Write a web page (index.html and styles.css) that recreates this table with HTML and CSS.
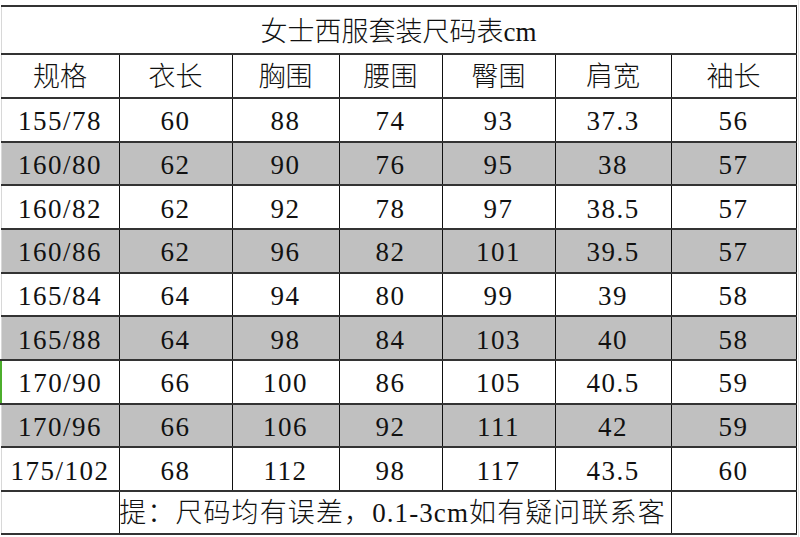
FILE: index.html
```html
<!DOCTYPE html>
<html lang="zh">
<head>
<meta charset="utf-8">
<title>女士西服套装尺码表</title>
<link rel="stylesheet" href="styles.css">
</head>
<body>
<div class="page">
<table class="size-table">
  <colgroup>
    <col class="c1"><col class="c2"><col class="c3"><col class="c4"><col class="c5"><col class="c6"><col class="c7">
  </colgroup>
  <tr class="title-row"><td colspan="7">女士西服套装尺码表<span class="lat">cm</span></td></tr>
  <tr class="head-row"><td>规格</td><td>衣长</td><td>胸围</td><td>腰围</td><td>臀围</td><td>肩宽</td><td>袖长</td></tr>
  <tr class="row"><td>155/78</td><td>60</td><td>88</td><td>74</td><td>93</td><td>37.3</td><td>56</td></tr>
  <tr class="row alt"><td>160/80</td><td>62</td><td>90</td><td>76</td><td>95</td><td>38</td><td>57</td></tr>
  <tr class="row"><td>160/82</td><td>62</td><td>92</td><td>78</td><td>97</td><td>38.5</td><td>57</td></tr>
  <tr class="row alt"><td>160/86</td><td>62</td><td>96</td><td>82</td><td>101</td><td>39.5</td><td>57</td></tr>
  <tr class="row"><td>165/84</td><td>64</td><td>94</td><td>80</td><td>99</td><td>39</td><td>58</td></tr>
  <tr class="row alt"><td>165/88</td><td>64</td><td>98</td><td>84</td><td>103</td><td>40</td><td>58</td></tr>
  <tr class="row"><td class="marked">170/90</td><td>66</td><td>100</td><td>86</td><td>105</td><td>40.5</td><td>59</td></tr>
  <tr class="row alt"><td>170/96</td><td>66</td><td>106</td><td>92</td><td>111</td><td>42</td><td>59</td></tr>
  <tr class="row"><td>175/102</td><td>68</td><td>112</td><td>98</td><td>117</td><td>43.5</td><td>60</td></tr>
  <tr class="foot-row"><td></td><td colspan="5" class="note"><div class="note-text">提：尺码均有误差，<span class="lat">0.1-3cm</span>如有疑问联系客</div></td><td></td></tr>
</table>
</div>
</body>
</html>
```

FILE: styles.css
```css
html, body {
  margin: 0;
  padding: 0;
  background: #fff;
}

.page {
  width: 799px;
  height: 537px;
  padding-top: 5px;
  box-sizing: border-box;
  border-right: 1px solid #e4e4e4;
  overflow: hidden;
}

.size-table {
  border-collapse: collapse;
  table-layout: fixed;
  width: 795px;
  font-family: "Liberation Serif", "Noto Sans CJK SC", serif;
  font-size: 27px;
  font-weight: 300;
  line-height: 30px;
  color: #111;
}

.c1 { width: 118px; }
.c2 { width: 113px; }
.c3 { width: 107px; }
.c4 { width: 103px; }
.c5 { width: 113px; }
.c6 { width: 116px; }
.c7 { width: 125px; }

.size-table td {
  border-left: 1px solid #111;
  border-right: 1px solid #111;
  border-top: 2px solid #333;
  border-bottom: 2px solid #333;
  text-align: center;
  vertical-align: middle;
  padding: 0;
  white-space: nowrap;
  overflow: hidden;
}

.size-table tr td:first-child {
  border-left: 1px solid #d8d8d8;
}

.title-row td {
  height: 42px;
  padding-top: 4px;
}

.head-row td {
  height: 40px;
  padding-top: 2px;
}

.row td {
  height: 38.67px;
  padding-top: 3px;
  letter-spacing: 1.5px;
}

.row.alt td {
  background: #c0c0c0;
}

.size-table tr td.marked {
  border-left: 2px solid #4cae2c;
}

.foot-row td {
  height: 39px;
  padding-top: 2px;
}

.note {
  text-align: left;
}

.note-text {
  width: 560px;
  margin-left: -7px;
  overflow: hidden;
  white-space: nowrap;
  letter-spacing: 1.1px;
}

.lat {
  font-family: "Liberation Serif", serif;
}
```
